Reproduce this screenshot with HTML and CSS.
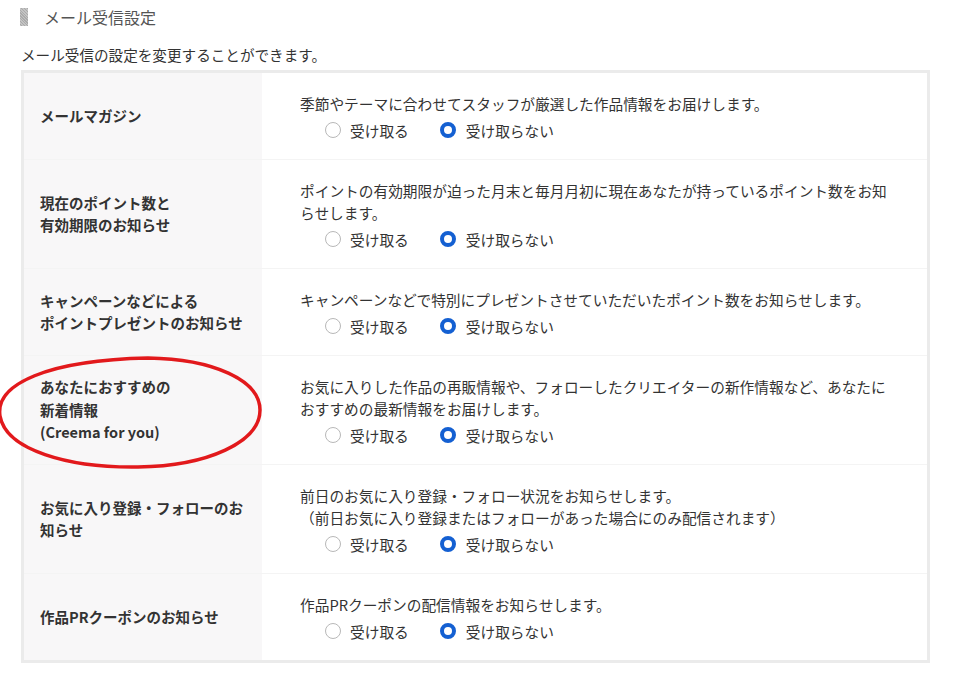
FILE: index.html
```html
<!DOCTYPE html>
<html lang="ja">
<head>
<meta charset="utf-8">
<title>メール受信設定</title>
<link rel="stylesheet" href="styles.css">
</head>
<body>
<div class="page">
  <h2 class="heading"><span class="heading-mark"></span><span class="heading-text">メール受信設定</span></h2>
  <p class="lead">メール受信の設定を変更することができます。</p>
  <div class="settings">
    <div class="row">
      <div class="label">メールマガジン</div>
      <div class="body">
        <p class="desc">季節やテーマに合わせてスタッフが厳選した作品情報をお届けします。</p>
        <div class="radios">
          <label class="opt"><input type="radio" name="r1" class="radio"><span>受け取る</span></label>
          <label class="opt"><input type="radio" name="r1" class="radio" checked><span>受け取らない</span></label>
        </div>
      </div>
    </div>
    <div class="row">
      <div class="label">現在のポイント数と<br>有効期限のお知らせ</div>
      <div class="body">
        <p class="desc">ポイントの有効期限が迫った月末と毎月月初に現在あなたが持っているポイント数をお知らせします。</p>
        <div class="radios">
          <label class="opt"><input type="radio" name="r2" class="radio"><span>受け取る</span></label>
          <label class="opt"><input type="radio" name="r2" class="radio" checked><span>受け取らない</span></label>
        </div>
      </div>
    </div>
    <div class="row">
      <div class="label">キャンペーンなどによる<br>ポイントプレゼントのお知らせ</div>
      <div class="body">
        <p class="desc">キャンペーンなどで特別にプレゼントさせていただいたポイント数をお知らせします。</p>
        <div class="radios">
          <label class="opt"><input type="radio" name="r3" class="radio"><span>受け取る</span></label>
          <label class="opt"><input type="radio" name="r3" class="radio" checked><span>受け取らない</span></label>
        </div>
      </div>
    </div>
    <div class="row">
      <div class="label">あなたにおすすめの<br>新着情報<br>(Creema for you)</div>
      <div class="body">
        <p class="desc">お気に入りした作品の再販情報や、フォローしたクリエイターの新作情報など、あなたにおすすめの最新情報をお届けします。</p>
        <div class="radios">
          <label class="opt"><input type="radio" name="r4" class="radio"><span>受け取る</span></label>
          <label class="opt"><input type="radio" name="r4" class="radio" checked><span>受け取らない</span></label>
        </div>
      </div>
    </div>
    <div class="row">
      <div class="label">お気に入り登録・フォローのお知らせ</div>
      <div class="body">
        <p class="desc">前日のお気に入り登録・フォロー状況をお知らせします。<br>（前日お気に入り登録またはフォローがあった場合にのみ配信されます）</p>
        <div class="radios">
          <label class="opt"><input type="radio" name="r5" class="radio"><span>受け取る</span></label>
          <label class="opt"><input type="radio" name="r5" class="radio" checked><span>受け取らない</span></label>
        </div>
      </div>
    </div>
    <div class="row">
      <div class="label">作品PRクーポンのお知らせ</div>
      <div class="body">
        <p class="desc">作品PRクーポンの配信情報をお知らせします。</p>
        <div class="radios">
          <label class="opt"><input type="radio" name="r6" class="radio"><span>受け取る</span></label>
          <label class="opt"><input type="radio" name="r6" class="radio" checked><span>受け取らない</span></label>
        </div>
      </div>
    </div>
  </div>
</div>
<svg class="circle-mark" width="280" height="130" viewBox="0 0 280 130" aria-hidden="true">
  <path d="M150 8 C 215 9, 262 30, 262 60 C 262 92, 210 116, 140 117 C 70 118, 8 100, 2 66 C -3 34, 50 10, 150 8 Z" fill="none" stroke="#e2191c" stroke-width="3.5"/>
</svg>
</body>
</html>
```
FILE: styles.css
```css
html, body {
  margin: 0;
  padding: 0;
  background: #fff;
}
body {
  font-family: "Noto Sans CJK JP", "Noto Sans", sans-serif;
  color: #333;
  position: relative;
}
.page {
  padding: 7px 0 0 21px;
  width: 909px;
}
.heading {
  display: flex;
  align-items: center;
  gap: 16px;
  margin: 0;
  height: 20px;
  font-weight: normal;
}
.heading-mark {
  width: 8px;
  height: 18px;
  margin-left: -1px;
  background-color: #aaa;
  background-image: repeating-linear-gradient(45deg, rgba(255,255,255,0.3) 0 1px, transparent 1px 2px);
}
.heading-text {
  font-size: 16px;
  color: #555;
  line-height: 20px;
}
.lead {
  margin: 18px 0 0;
  font-size: 14.6px;
  line-height: 20px;
  color: #333;
}
.settings {
  margin-top: 5px;
  border: 3px solid #ebebeb;
}
.row {
  display: grid;
  grid-template-columns: 238px 1fr;
  border-bottom: 1px solid #f4f4f4;
}
.row:last-child {
  border-bottom: none;
}
.label {
  background: #f8f7f8;
  display: flex;
  align-items: center;
  padding: 0 10px 0 16px;
  font-weight: bold;
  font-size: 14.5px;
  line-height: 22.5px;
  color: #333;
}
.body {
  padding: 20px 26px 18px 38px;
}
.desc {
  margin: 0;
  font-size: 14.7px;
  line-height: 22px;
  color: #333;
  width: 598px;
}
.radios {
  margin-top: 4px;
  height: 22px;
  display: flex;
  align-items: center;
  padding-left: 25px;
  gap: 31px;
}
.opt {
  display: flex;
  align-items: center;
  font-size: 14.7px;
  color: #333;
}
.radio {
  appearance: none;
  -webkit-appearance: none;
  margin: 0 9px 0 0;
  width: 16px;
  height: 16px;
  border-radius: 50%;
  border: 1px solid #b8b8b8;
  background: #fff;
  box-sizing: border-box;
}
.radio:checked {
  border: 4px solid #1460d2;
  margin-right: 10px;
}
.circle-mark {
  position: absolute;
  left: -2px;
  top: 350px;
}
```
